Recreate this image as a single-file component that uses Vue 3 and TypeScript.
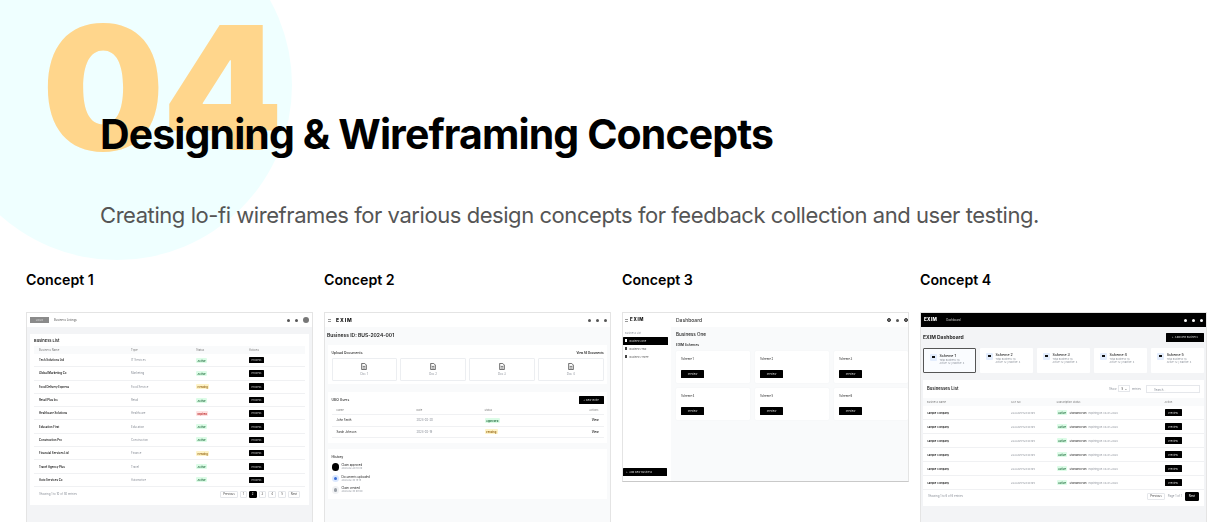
<template>
  <div class="page">
    <div class="circle"></div>
    <div class="big-number">04</div>

    <header class="hero">
      <h1>Designing &amp; Wireframing Concepts</h1>
      <p>Creating lo-fi wireframes for various design concepts for feedback collection and user testing.</p>
    </header>

    <section class="concepts">
      <!-- Concept 1 -->
      <div class="concept">
        <h2>Concept 1</h2>
        <div class="shot grey-bg">
          <div class="bar">
            <span class="logo-box">LOGO</span>
            <span class="bar-title">Business Listings</span>
            <span class="spacer"></span>
            <span class="dot"></span>
            <span class="dot"></span>
            <span class="avatar"></span>
          </div>
          <div class="c1-panel">
            <div class="c1-title">Business List</div>
            <div class="c1-row c1-head">
              <span>Business Name</span><span>Type</span><span>Status</span><span>Actions</span>
            </div>
            <div v-for="row in c1Rows" :key="row.name" class="c1-row">
              <span class="strong">{{ row.name }}</span>
              <span class="muted">{{ row.type }}</span>
              <span><em class="tag" :class="row.status.toLowerCase()">{{ row.status }}</em></span>
              <span><button class="btn c1-btn">Process</button></span>
            </div>
            <div class="c1-foot">
              <span class="muted">Showing 1 to 10 of 50 entries</span>
              <span class="spacer"></span>
              <span class="pg">Previous</span>
              <span class="pg">1</span>
              <span class="pg on">2</span>
              <span class="pg">3</span>
              <span class="pg">4</span>
              <span class="pg">5</span>
              <span class="pg">Next</span>
            </div>
          </div>
        </div>
      </div>

      <!-- Concept 2 -->
      <div class="concept">
        <h2>Concept 2</h2>
        <div class="shot light-bg">
          <div class="bar">
            <span class="burger"></span>
            <span class="exim">EXIM</span>
            <span class="spacer"></span>
            <span class="dot"></span>
            <span class="dot"></span>
            <span class="dot"></span>
          </div>
          <div class="c2-id">Business ID: BUS-2024-001</div>
          <div class="c2-section c2-docs">
            <div class="c2-line">
              <span class="c2-sub">Upload Documents</span>
              <span class="strong">View All Documents</span>
            </div>
            <div class="c2-grid">
              <div v-for="n in 4" :key="n" class="doc">
                <svg width="6" height="7" viewBox="0 0 6 7">
                  <path d="M.7.4h3l1.6 1.6v4.6H.7z" fill="none" stroke="#444" stroke-width=".8" />
                  <path d="M1.7 3.4h2.6M1.7 5h2.6" stroke="#444" stroke-width=".7" />
                </svg>
                <span class="muted">Doc {{ n }}</span>
              </div>
            </div>
          </div>
          <div class="c2-section c2-users">
            <div class="c2-line">
              <span class="c2-sub">UBO Users</span>
              <button class="btn c2-new">+ New Invite</button>
            </div>
            <div class="c2-row c2-head">
              <span>Name</span><span>Date</span><span>Status</span><span class="right">Actions</span>
            </div>
            <div v-for="u in c2Users" :key="u.name" class="c2-row">
              <span>{{ u.name }}</span>
              <span class="muted">{{ u.date }}</span>
              <span><em class="tag" :class="u.status === 'Approved' ? 'active' : 'pending'">{{ u.status }}</em></span>
              <span class="right strong">View</span>
            </div>
          </div>
          <div class="c2-section c2-history">
            <div class="c2-sub">History</div>
            <div v-for="h in c2History" :key="h.label" class="hist">
              <span class="hist-dot" :class="h.kind"></span>
              <div class="hist-text">
                <span>{{ h.label }}</span>
                <span class="muted">{{ h.date }}</span>
              </div>
            </div>
          </div>
        </div>
      </div>

      <!-- Concept 3 -->
      <div class="concept">
        <h2>Concept 3</h2>
        <div class="shot c3">
          <aside class="c3-side">
            <div class="c3-brand">
              <span class="burger"></span>
              <span class="exim">EXIM</span>
            </div>
            <div class="c3-label muted">Business List</div>
            <div
              v-for="(b, i) in c3Businesses"
              :key="b"
              class="c3-item"
              :class="{ on: i === 0 }"
            >
              <span class="c3-bullet"></span>{{ b }}
            </div>
            <span class="spacer"></span>
            <button class="btn c3-add">+&nbsp;&nbsp;Add New Business</button>
          </aside>
          <div class="c3-main">
            <div class="bar c3-bar">
              <span class="c3-dash">Dashboard</span>
              <span class="spacer"></span>
              <span class="ring"></span>
              <span class="dot"></span>
              <span class="ring"></span>
            </div>
            <div class="c3-body">
              <div class="c3-name">Business One</div>
              <div class="c3-schemes">EXIM Schemes</div>
              <div class="c3-grid">
                <div v-for="n in 6" :key="n" class="c3-card">
                  <span>Scheme {{ n }}</span>
                  <button class="btn c3-btn">Preview</button>
                </div>
              </div>
            </div>
          </div>
        </div>
      </div>

      <!-- Concept 4 -->
      <div class="concept">
        <h2>Concept 4</h2>
        <div class="shot grey-bg">
          <div class="bar c4-bar">
            <span class="exim c4-exim">EXIM</span>
            <span class="c4-dashlink">Dashboard</span>
            <span class="spacer"></span>
            <span class="dot white"></span>
            <span class="dot white"></span>
            <span class="dot white"></span>
          </div>
          <div class="c4-top">
            <span class="c4-title">EXIM Dashboard</span>
            <button class="btn c4-add">+&nbsp;&nbsp;Add New Business</button>
          </div>
          <div class="c4-schemes">
            <div v-for="n in 5" :key="n" class="c4-card" :class="{ on: n === 1 }">
              <span class="c4-icon"><i></i></span>
              <div class="c4-info">
                <b>Scheme {{ n }}</b>
                <span class="muted">Total Business: 16</span>
                <span class="muted">Active: 12 | Inactive: 4</span>
              </div>
            </div>
          </div>
          <div class="c4-panel">
            <div class="c4-head-line">
              <b class="c4-list-title">Businesses List</b>
              <span class="spacer"></span>
              <span class="muted">Show</span>
              <span class="c4-select">5 &nbsp;&#8964;</span>
              <span class="muted">entries</span>
              <span class="c4-search muted">Search...</span>
            </div>
            <div class="c4-row c4-thead">
              <span>Business Name</span><span>GST No</span><span>Subscription Status</span><span>Action</span>
            </div>
            <div v-for="n in 6" :key="n" class="c4-row">
              <span class="strong">Sample Company</span>
              <span class="muted">22AAAPP1234C1Z5</span>
              <span class="c4-sub">
                <em class="tag active">Active</em>
                <span>Standard Plan</span>
                <span class="muted">Expiring on 30-01-2024</span>
              </span>
              <span><button class="btn c4-btn">Preview</button></span>
            </div>
            <div class="c4-foot">
              <span class="muted">Showing 1 to 6 of 6 entries</span>
              <span class="spacer"></span>
              <span class="pg">Previous</span>
              <span class="muted">Page 1 of 1</span>
              <span class="pg on c4-next">Next</span>
            </div>
          </div>
        </div>
      </div>
    </section>
  </div>
</template>

<script setup lang="ts">
interface BusinessRow {
  name: string
  type: string
  status: 'Active' | 'Pending' | 'Expired'
}

const c1Rows: BusinessRow[] = [
  { name: 'Tech Solutions Ltd', type: 'IT Services', status: 'Active' },
  { name: 'Global Marketing Co', type: 'Marketing', status: 'Active' },
  { name: 'Food Delivery Express', type: 'Food Service', status: 'Pending' },
  { name: 'Retail Plus Inc', type: 'Retail', status: 'Active' },
  { name: 'Healthcare Solutions', type: 'Healthcare', status: 'Expired' },
  { name: 'Education First', type: 'Education', status: 'Active' },
  { name: 'Construction Pro', type: 'Construction', status: 'Active' },
  { name: 'Financial Services Ltd', type: 'Finance', status: 'Pending' },
  { name: 'Travel Agency Plus', type: 'Travel', status: 'Active' },
  { name: 'Auto Services Co', type: 'Automotive', status: 'Active' },
]

const c2Users = [
  { name: 'John Smith', date: '2024-02-20', status: 'Approved' },
  { name: 'Sarah Johnson', date: '2024-02-19', status: 'Pending' },
]

const c2History = [
  { label: 'Claim approved', date: '2024-02-20 10:30', kind: 'black' },
  { label: 'Documents uploaded', date: '2024-02-19 15:15', kind: 'blue' },
  { label: 'Claim created', date: '2024-02-19 09:00', kind: 'grey' },
]

const c3Businesses = ['Business One', 'Business Two', 'Business Three']
</script>

<style>
html,
body {
  margin: 0;
  background: #fff;
}
</style>

<style scoped>
.page {
  position: relative;
  width: 1224px;
  height: 522px;
  overflow: hidden;
  background: #fff;
  font-family: Inter, "Liberation Sans", sans-serif;
  color: #000;
}

.circle {
  position: absolute;
  left: -58px;
  top: -90px;
  width: 350px;
  height: 350px;
  border-radius: 50%;
  background: #efffff;
}

.big-number {
  position: absolute;
  left: 42px;
  top: 0;
  font-size: 172px;
  line-height: 174px;
  font-weight: 900;
  letter-spacing: -2px;
  color: #ffd68c;
}

.hero {
  position: relative;
  padding: 108px 0 0 100px;
}

.hero h1 {
  margin: 0;
  font-size: 41px;
  line-height: 52px;
  font-weight: 700;
  letter-spacing: -0.9px;
}

.hero p {
  margin: 40px 0 0;
  font-size: 22px;
  line-height: 30px;
  letter-spacing: -0.44px;
  color: #555;
}

.concepts {
  position: relative;
  display: grid;
  grid-template-columns: repeat(4, 287px);
  gap: 11px;
  margin-top: 40px;
  padding-left: 26px;
}

.concept h2 {
  margin: 0 0 22px;
  font-size: 14.2px;
  line-height: 20px;
  font-weight: 600;
}

.shot {
  height: 210px;
  overflow: hidden;
  box-sizing: border-box;
  border: 1px solid #e4e4e4;
  border-bottom: 0;
  font-size: 2.8px;
  line-height: 4px;
  color: #222;
  filter: blur(0.45px);
}

.grey-bg { background: #f3f4f6; }
.light-bg { background: #f9fafb; }

.spacer { flex: 1; }
.muted { color: #8a8f98; }
.strong { font-weight: 600; color: #111; }
.right { text-align: right; }

.bar {
  display: flex;
  align-items: center;
  gap: 5px;
  height: 14px;
  padding: 0 3px;
  background: #fff;
}

.dot, .ring, .avatar {
  width: 3px;
  height: 3px;
  border-radius: 50%;
  background: #555;
}

.dot.white { background: #fff; }

.ring {
  box-sizing: border-box;
  width: 4px;
  height: 4px;
  background: #777;
  border: 1px solid #333;
}

.avatar {
  width: 6px;
  height: 6px;
  background: #777;
}

.burger {
  width: 3px;
  height: 3px;
  border-top: 1px solid #999;
  border-bottom: 1px solid #999;
  box-sizing: border-box;
}

.exim {
  font-size: 5px;
  font-weight: 800;
  letter-spacing: 0.9px;
  color: #111;
}

.btn {
  border: 0;
  padding: 0;
  border-radius: 0.5px;
  background: #000;
  color: #ddd;
  font: inherit;
  font-size: 2.6px;
}

.tag {
  padding: 0.5px 1.5px;
  border-radius: 1px;
  font-style: normal;
  font-weight: 600;
  font-size: 2.6px;
}

.tag.active { background: #dcfce7; color: #166534; }
.tag.pending { background: #fef3c7; color: #92600e; }
.tag.expired { background: #fee2e2; color: #b91c1c; }

.pg {
  padding: 0.5px 2px;
  border: 0.5px solid #e5e7eb;
  border-radius: 1px;
  background: #fff;
  color: #444;
}

.pg.on {
  background: #000;
  color: #fff;
  border-color: #000;
}

/* concept 1 */
.logo-box {
  width: 19px;
  height: 6px;
  background: #8a8a8a;
  color: #ddd;
  text-align: center;
  line-height: 6px;
  font-size: 2.6px;
}

.bar-title { color: #555; }

.c1-panel {
  margin: 7px 3px 0;
  padding: 4px 4px 0;
  height: 171px;
  box-sizing: border-box;
  background: #fff;
}

.c1-title {
  font-size: 4px;
  line-height: 6px;
  font-weight: 600;
  margin-bottom: 2px;
}

.c1-row {
  display: grid;
  grid-template-columns: 92px 65px 53px 1fr;
  align-items: center;
  height: 13.3px;
  padding-left: 5px;
  border-bottom: 0.5px solid #f0f1f3;
  box-sizing: border-box;
}

.c1-head {
  height: 8px;
  background: #f9fafb;
  color: #777;
  border: 0;
}

.c1-btn {
  display: block;
  width: 15px;
  height: 6.5px;
}

.c1-foot {
  display: flex;
  align-items: center;
  gap: 2px;
  height: 15px;
  padding: 0 5px;
}

/* concept 2 */
.c2-id {
  padding: 5px 2px 0;
  font-size: 5px;
  line-height: 7px;
  font-weight: 600;
}

.c2-section {
  margin: 0 3px;
  padding: 0 3.5px;
  background: #fff;
  box-sizing: border-box;
}

.c2-docs { margin-top: 6px; height: 39px; padding-top: 6px; }
.c2-users { margin-top: 8px; height: 51px; padding-top: 4px; }
.c2-history { margin-top: 6px; height: 50px; padding-top: 6px; }

.c2-line {
  display: flex;
  align-items: center;
  justify-content: space-between;
}

.c2-sub {
  font-size: 3.4px;
  font-weight: 500;
}

.c2-grid {
  display: grid;
  grid-template-columns: repeat(4, 1fr);
  gap: 3.5px;
  margin-top: 3px;
}

.doc {
  display: flex;
  flex-direction: column;
  align-items: center;
  justify-content: center;
  gap: 2px;
  height: 21px;
  border: 0.5px solid #eceef1;
  border-radius: 1px;
}

.c2-new {
  width: 25px;
  height: 8px;
}

.c2-row {
  display: grid;
  grid-template-columns: 80px 68px 60px 1fr;
  align-items: center;
  height: 11.5px;
  padding: 0 5px;
  border-bottom: 0.5px solid #f0f1f3;
  box-sizing: border-box;
}

.c2-head {
  height: 9px;
  margin-top: 2px;
  color: #777;
  font-size: 2.6px;
}

.hist {
  display: flex;
  align-items: center;
  gap: 2.5px;
  margin-top: 4px;
}

.c2-sub + .hist { margin-top: 4px; }

.hist-dot {
  position: relative;
  flex: none;
  width: 7.5px;
  height: 7.5px;
  border-radius: 50%;
}

.hist-dot.black { background: #000; }
.hist-dot.blue { background: #dbe8fe; }
.hist-dot.grey { background: #f1f2f4; }

.hist-dot.blue::after,
.hist-dot.grey::after {
  content: "";
  position: absolute;
  inset: 2px;
  border-radius: 50%;
  background: #3b6fd8;
}

.hist-dot.grey::after { background: #9aa0a8; }

.hist-text {
  display: flex;
  flex-direction: column;
}

.hist-text span:last-child { font-size: 2.4px; line-height: 3px; }

/* concept 3 */
.shot.c3 {
  display: flex;
  height: 170px;
  border-bottom: 1.5px solid #c9c9c9;
  background: #f9fafb;
}

.c3-side {
  display: flex;
  flex-direction: column;
  flex: none;
  width: 48px;
  padding-bottom: 5px;
  box-sizing: border-box;
  background: #fff;
}

.c3-brand {
  display: flex;
  align-items: center;
  gap: 2px;
  height: 14px;
  padding-left: 2px;
}

.c3-brand .exim { font-size: 4.4px; letter-spacing: 0.7px; }

.c3-label {
  margin: 4px 0 1.5px 2px;
  font-size: 2.6px;
}

.c3-item {
  display: flex;
  align-items: center;
  gap: 2.5px;
  width: 45px;
  height: 8px;
  padding-left: 2px;
  box-sizing: border-box;
  font-size: 2.6px;
  color: #555;
}

.c3-item.on {
  background: #000;
  color: #ddd;
  border-radius: 0.5px;
}

.c3-bullet {
  width: 2px;
  height: 2.5px;
  background: #444;
}

.c3-item.on .c3-bullet { background: #fff; }

.c3-add {
  width: 44px;
  height: 8px;
  text-align: left;
  padding-left: 3px;
}

.c3-main {
  flex: 1;
  min-width: 0;
}

.c3-bar { padding: 0 0 0 5px; }

.c3-dash {
  font-size: 5px;
  font-weight: 500;
  color: #333;
}

.c3-body { padding: 4px 0 0 5px; }

.c3-name {
  font-size: 4.6px;
  line-height: 7px;
  font-weight: 500;
}

.c3-schemes {
  margin-top: 5px;
  font-size: 3.2px;
  font-weight: 600;
}

.c3-grid {
  display: grid;
  grid-template-columns: repeat(3, 74px);
  gap: 4.5px 5px;
  margin-top: 3.5px;
}

.c3-card {
  display: flex;
  flex-direction: column;
  justify-content: space-between;
  align-items: flex-start;
  height: 32.5px;
  padding: 6px 5px 5px;
  box-sizing: border-box;
  background: #fff;
  border-radius: 1px;
  box-shadow: 0 0 1px #e5e7eb;
}

.c3-btn {
  width: 23px;
  height: 8px;
}

/* concept 4 */
.c4-bar {
  background: #000;
  padding: 0 3px;
  gap: 5px;
}

.c4-exim { color: #fff; font-size: 4.6px; letter-spacing: 0.3px; }
.c4-dashlink { margin-left: 4px; color: #ccc; }

.c4-top {
  display: flex;
  align-items: center;
  justify-content: space-between;
  margin-top: 6px;
  padding: 0 2px;
}

.c4-title {
  font-size: 5px;
  line-height: 8px;
  font-weight: 700;
}

.c4-add {
  width: 38.5px;
  height: 8.5px;
}

.c4-schemes {
  display: grid;
  grid-template-columns: repeat(5, 1fr);
  gap: 4.2px;
  margin-top: 6px;
  padding: 0 2px;
}

.c4-card {
  display: flex;
  gap: 3px;
  height: 25px;
  padding: 5px 3px 0 6px;
  box-sizing: border-box;
  background: #fff;
  border-radius: 1px;
}

.c4-card.on {
  border: 0.7px solid #555;
  background: #fafcff;
}

.c4-icon {
  display: flex;
  align-items: center;
  justify-content: center;
  flex: none;
  width: 6.5px;
  height: 7px;
  background: #e3edfd;
  border-radius: 1px;
}

.c4-icon i {
  width: 2.5px;
  height: 2.5px;
  background: #111;
}

.c4-info {
  display: flex;
  flex-direction: column;
  min-width: 0;
  white-space: nowrap;
  font-size: 2.4px;
  line-height: 3.2px;
}

.c4-info b {
  font-size: 3.6px;
  line-height: 5px;
  font-weight: 500;
  color: #111;
}

.c4-panel {
  margin: 7px 2px 0;
  height: 126px;
  box-sizing: border-box;
  background: #fff;
}

.c4-head-line {
  display: flex;
  align-items: center;
  gap: 2px;
  height: 18px;
  padding: 0 4px;
}

.c4-list-title {
  font-size: 4.2px;
  font-weight: 600;
}

.c4-select {
  padding: 0.5px 2px;
  border: 0.5px solid #e5e7eb;
}

.c4-search {
  width: 54px;
  height: 8px;
  margin-left: 3px;
  padding-left: 7px;
  line-height: 8px;
  box-sizing: border-box;
  border: 0.5px solid #e5e7eb;
}

.c4-row {
  display: grid;
  grid-template-columns: 84px 45.5px 108px 1fr;
  align-items: center;
  height: 14px;
  padding-left: 4px;
  box-sizing: border-box;
  border-bottom: 0.5px solid #f0f1f3;
  font-size: 2.6px;
}

.c4-thead {
  height: 8.5px;
  background: #f9fafb;
  color: #777;
  border: 0;
}

.c4-sub {
  display: flex;
  align-items: center;
  gap: 2px;
  white-space: nowrap;
}

.c4-btn {
  display: block;
  width: 17px;
  height: 7.5px;
}

.c4-foot {
  display: flex;
  align-items: center;
  gap: 3px;
  height: 12px;
  padding: 0 5px;
}

.c4-next { padding: 1.5px 3px; }
</style>
